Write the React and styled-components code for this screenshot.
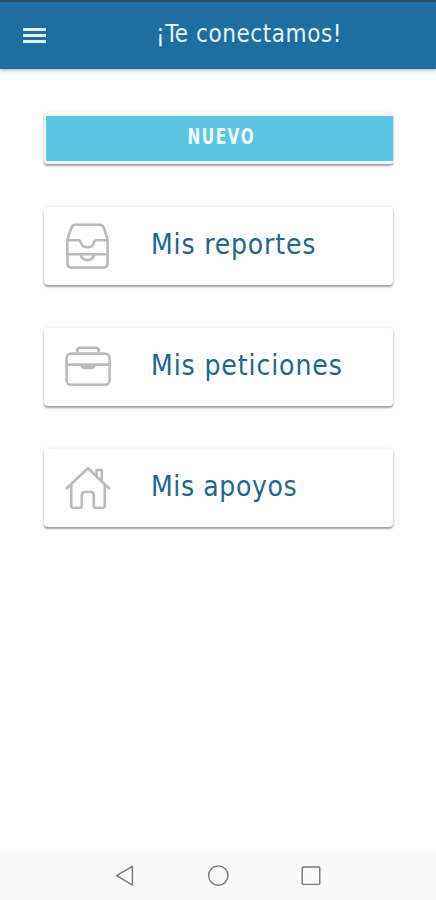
import styled, { createGlobalStyle } from "styled-components";

const items = [
  { id: "reportes", title: "Mis reportes", spacing: 0.82, icon: <ReportsIcon /> },
  { id: "peticiones", title: "Mis peticiones", spacing: 0.9, icon: <BriefcaseIcon /> },
  { id: "apoyos", title: "Mis apoyos", spacing: 0.6, icon: <HouseIcon /> },
];

export default function App() {
  return (
    <Screen>
      <GlobalStyle />
      <AppBar>
        <MenuButton aria-label="Menú">
          <span />
          <span />
          <span />
        </MenuButton>
        <Title>¡Te conectamos!</Title>
      </AppBar>
      <Content>
        <NewButton>
          <NewLabel>NUEVO</NewLabel>
        </NewButton>
        {items.map((item) => (
          <Card key={item.id}>
            <CardIcon>{item.icon}</CardIcon>
            <CardTitle $spacing={item.spacing}>{item.title}</CardTitle>
          </Card>
        ))}
      </Content>
      <NavBar>
        <svg width="20" height="22" viewBox="0 0 20 22">
          <path d="M17.4 1.4v18.6L1.6 10.7z" />
        </svg>
        <svg width="22" height="22" viewBox="0 0 22 22">
          <circle cx="11.3" cy="10.6" r="9.7" />
        </svg>
        <svg width="20" height="22" viewBox="0 0 20 22">
          <rect x="1.2" y="2" width="17.6" height="17.4" rx="1.2" />
        </svg>
      </NavBar>
    </Screen>
  );
}

function ReportsIcon() {
  return (
    <svg width="48" height="48" viewBox="0 0 48 48">
      <path d="M3.4 20Q3.6 15.5 7.2 6.2 8.4 2.8 11.4 2.8H35.8Q38.8 2.8 40 6.2 43.4 15.5 43.6 20V41.2Q43.6 45.6 39.2 45.6H7.8Q3.4 45.6 3.4 41.2Z" />
      <path d="M4 18.2H14.6c2 0 1.9 1.3 2.5 3 2 5.4 10.6 5.4 12.6 0 .6-1.7.5-3 2.5-3H43" />
      <path d="M3.6 32.2H43.4M16.6 32.6c2 7.2 11.8 7.2 13.8 0" />
    </svg>
  );
}

function BriefcaseIcon() {
  return (
    <svg width="48" height="48" viewBox="0 0 48 48">
      <rect x="2.6" y="10.6" width="43" height="31.2" rx="4.5" />
      <path d="M13.2 10.2V7.6q0-2.8 2.8-2.8H32q2.8 0 2.8 2.8v2.6" />
      <path d="M2.8 21.6H45.4M17.6 22.2q.3 2.8 3 2.8h6.8q2.7 0 3-2.8" />
      <path d="M18.5 23h11" />
    </svg>
  );
}

function HouseIcon() {
  return (
    <svg width="48" height="48" viewBox="0 0 48 48">
      <path d="M2.6 24.4 24 4.2 45.2 24.4M7.2 21.4V41.8Q7.2 43.8 9.2 43.8H15.8Q17.8 43.8 17.8 41.8V31Q17.8 28 20.8 28H26.8Q29.8 28 29.8 31V41.8Q29.8 43.8 31.8 43.8H38.8Q40.8 43.8 40.8 41.8V21.4" />
      <path d="M32.6 10.8V6H37.8V16" />
    </svg>
  );
}

const GlobalStyle = createGlobalStyle`
  * {
    box-sizing: border-box;
  }

  body {
    margin: 0;
    background: #fefefe;
    font-family: "DejaVu Sans Condensed", "DejaVu Sans", sans-serif;
    font-stretch: condensed;
  }

  button {
    border: 0;
    padding: 0;
    font: inherit;
  }
`;

const Screen = styled.main`
  display: flex;
  flex-direction: column;
  width: 436px;
  height: 900px;
  overflow: hidden;
  background: #fefefe;
`;

const AppBar = styled.header`
  display: flex;
  align-items: center;
  flex-shrink: 0;
  height: 69px;
  padding: 0 23px;
  border-top: 2px solid #2c4f68;
  background: #1f6ea1;
  box-shadow: 0 1px 4px rgba(0, 0, 0, 0.35);
`;

const MenuButton = styled.button`
  display: flex;
  flex-direction: column;
  gap: 3px;
  width: 23px;
  background: none;

  span {
    height: 3px;
    background: #e0f5fb;
  }
`;

const Title = styled.h1`
  margin: 0 0 3px 110px;
  font-size: 24px;
  font-weight: 400;
  line-height: 30px;
  letter-spacing: 0.55px;
  white-space: nowrap;
  color: #e2f6fc;
`;

const Content = styled.div`
  display: flex;
  flex: 1;
  flex-direction: column;
  gap: 43px;
  padding: 44px 43px 0 44px;
`;

const NewButton = styled.button`
  display: flex;
  align-items: center;
  justify-content: center;
  height: 51px;
  border: solid #f6f6f6;
  border-width: 3px 0 3px 2px;
  border-radius: 3px;
  background: #5ac6e2;
  background-clip: padding-box;
  box-shadow:
    0 2px 2px rgba(0, 0, 0, 0.34),
    0 0 3px rgba(0, 0, 0, 0.12);
`;

const NewLabel = styled.span`
  font-size: 20.5px;
  font-weight: 700;
  line-height: 24px;
  letter-spacing: 1.8px;
  color: #f2fcfe;
  transform: translate(1.5px, -2px) scaleX(0.83);
`;

const Card = styled.section`
  display: flex;
  align-items: center;
  height: 78px;
  padding-left: 20px;
  border-radius: 4px;
  background: #fefefe;
  box-shadow:
    0 2px 2px rgba(0, 0, 0, 0.34),
    0 0 3px rgba(0, 0, 0, 0.12);
`;

const CardIcon = styled.div`
  width: 48px;
  height: 48px;

  svg {
    display: block;
    fill: none;
    stroke: #bababa;
    stroke-width: 2.6;
    stroke-linecap: round;
    stroke-linejoin: round;
  }
`;

const CardTitle = styled.h2`
  margin: 0 0 2px 39px;
  font-size: 28px;
  font-weight: 400;
  line-height: 36px;
  letter-spacing: ${({ $spacing }) => $spacing}px;
  white-space: nowrap;
  color: #1d6790;
`;

const NavBar = styled.nav`
  display: flex;
  align-items: center;
  justify-content: space-between;
  flex-shrink: 0;
  height: 48px;
  padding: 0 115px;
  background: #fafafa;

  svg {
    fill: none;
    stroke: #777;
    stroke-width: 1.4;
    stroke-linejoin: round;
  }
`;
